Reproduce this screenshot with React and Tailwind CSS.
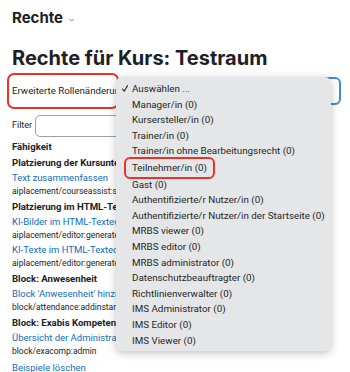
import React from 'react';

const roles = [
    'Manager/in (0)',
    'Kursersteller/in (0)',
    'Trainer/in (0)',
    'Trainer/in ohne Bearbeitungsrecht (0)',
    'Teilnehmer/in (0)',
    'Gast (0)',
    'Authentifizierte/r Nutzer/in (0)',
    'Authentifizierte/r Nutzer/in der Startseite (0)',
    'MRBS viewer (0)',
    'MRBS editor (0)',
    'MRBS administrator (0)',
    'Datenschutzbeauftragter (0)',
    'Richtlinienverwalter (0)',
    'IMS Administrator (0)',
    'IMS Editor (0)',
    'IMS Viewer (0)',
];

const rows = [
    { type: 'head', text: 'Platzierung der Kursunterstützung' },
    { type: 'cap', link: 'Text zusammenfassen', code: 'aiplacement/courseassist:summarise_text' },
    { type: 'head', text: 'Platzierung im HTML-Texteditor' },
    { type: 'cap', link: 'KI-Bilder im HTML-Texteditor generieren', code: 'aiplacement/editor:generate_image' },
    { type: 'cap', link: 'KI-Texte im HTML-Texteditor generieren', code: 'aiplacement/editor:generate_text' },
    { type: 'head', text: 'Block: Anwesenheit' },
    { type: 'cap', link: "Block 'Anwesenheit' hinzufügen", code: 'block/attendance:addinstance' },
    { type: 'head', text: 'Block: Exabis Kompetenzraster' },
    { type: 'cap', link: 'Übersicht der Administration', code: 'block/exacomp:admin' },
];

export default function App() {
    return (
        <div className="relative h-[372px] w-[350px] overflow-hidden bg-white px-3 text-[#1d2125]" style={{ fontFamily: 'Roboto, "Liberation Sans", sans-serif' }}>
            <div className="flex items-center gap-[6px] pt-[9px] text-[15px] font-bold leading-[18px]" style={{ fontFamily: 'Inter, sans-serif' }}>
                Rechte
                <svg width="5" height="4" viewBox="0 0 5 4" className="mt-[3px]">
                    <path d="M0.5 1 L2.5 3 L4.5 1" fill="none" stroke="#6a737b" strokeWidth="0.9" />
                </svg>
            </div>

            <h1 className="mt-[19px] text-[20px] font-bold leading-[24px]" style={{ fontFamily: 'Inter, sans-serif' }}>Rechte für Kurs: Testraum</h1>

            <div className="mt-[3px] flex items-center">
                <div className="-ml-[5px] flex h-[36px] w-[112px] items-center overflow-hidden whitespace-nowrap rounded-[7px] border-[2.5px] border-[#e8332a] pl-[3px] text-[9.7px]">
                    Erweiterte Rollenänderungen
                </div>
                <div className="-mr-[3px] ml-[2px] h-[28px] flex-1 rounded-[6px] border-2 border-[#3d8ae6]"></div>
            </div>

            <div className="mt-[6px] flex items-center gap-[3px] text-[9px]">
                <span>Filter</span>
                <div className="h-[22px] w-[200px] rounded-[5px] border border-[#9aa0a6]"></div>
            </div>

            <div className="mt-[2px] w-[320px] overflow-hidden whitespace-nowrap">
                <div className="text-[9.6px] font-bold leading-[16px]">Fähigkeit</div>
                {rows.map((r, i) =>
                    r.type === 'head' ? (
                        <div key={i} className="text-[9.6px] font-bold leading-[16px]">{r.text}</div>
                    ) : (
                        <div key={i} className="pb-[2px]">
                            <div className="text-[9.5px] leading-[14.5px] text-[#0f6cbf]">{r.link}</div>
                            <div className="text-[8.5px] leading-[11.5px]">{r.code}</div>
                        </div>
                    )
                )}
                <div className="mt-[2px] text-[9.5px] leading-[14.5px] text-[#0f6cbf]">Beispiele löschen</div>
            </div>

            <div className="absolute left-[116px] top-[77px] w-[215px] whitespace-nowrap rounded-[6px] bg-[#e4e6e7] pb-[3px] pt-[4px] text-[9.8px] leading-[15.6px] text-[#262626] shadow-[0_2px_8px_rgba(0,0,0,0.25)]">
                <div className="flex items-center">
                    <span className="flex w-[16px] justify-center pl-[1px]">
                        <svg width="6" height="7" viewBox="0 0 6 7">
                            <path d="M0.5 4 L2.2 6.2 L5.6 0.6" fill="none" stroke="#262626" strokeWidth="1.1" strokeLinecap="round" strokeLinejoin="round" />
                        </svg>
                    </span>
                    <span>Auswählen ...</span>
                </div>
                {roles.map((r) => (
                    <div key={r} className="pl-[16px]">
                        {r === 'Teilnehmer/in (0)' ? (
                            <span className="-my-[2px] -ml-[8px] inline-block rounded-[6px] border-2 border-[#e8332a] px-[6px] py-[1px]">{r}</span>
                        ) : (
                            r
                        )}
                    </div>
                ))}
            </div>
        </div>
    );
}
